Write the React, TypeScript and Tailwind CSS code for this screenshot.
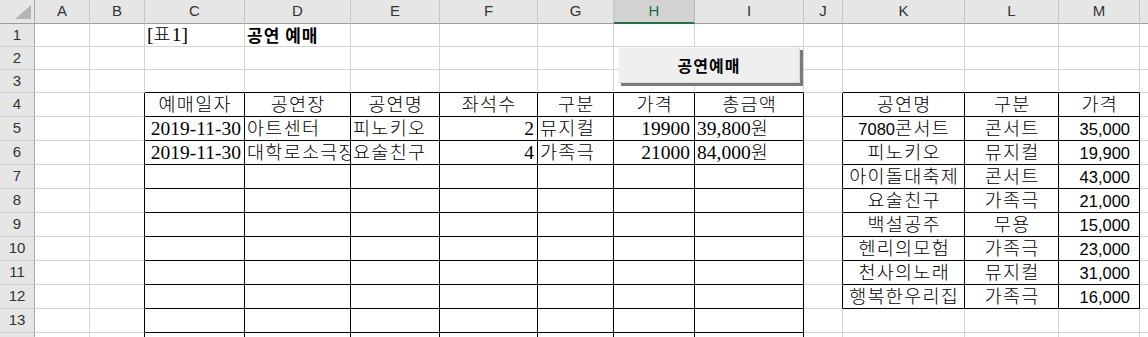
import React from "react";

const COLS = ["A", "B", "C", "D", "E", "F", "G", "H", "I", "J", "K", "L", "M"];
const COLW = [
  "w-[55px]",
  "w-[55px]",
  "w-[100px]",
  "w-[106px]",
  "w-[89px]",
  "w-[98px]",
  "w-[76px]",
  "w-[81px]",
  "w-[109px]",
  "w-[39px]",
  "w-[122px]",
  "w-[94px]",
  "w-[81px]",
];

type Align = "l" | "c" | "r";
type Font = "serif" | "sans" | "bold";
type Cell = { t: string; a: Align; f: Font };

const S = (t: string, a: Align): Cell => ({ t, a, f: "serif" });
const K = (t: string, a: Align): Cell => ({ t, a, f: "sans" });

const data: Record<number, Record<number, Cell>> = {
  1: { 2: S("[표1]", "l"), 3: { t: "공연 예매", a: "l", f: "bold" } },
  4: {
    2: S("예매일자", "c"),
    3: S("공연장", "c"),
    4: S("공연명", "c"),
    5: S("좌석수", "c"),
    6: S("구분", "c"),
    7: S("가격", "c"),
    8: S("총금액", "c"),
    10: K("공연명", "c"),
    11: K("구분", "c"),
    12: K("가격", "c"),
  },
  5: {
    2: S("2019-11-30", "r"),
    3: S("아트센터", "l"),
    4: S("피노키오", "l"),
    5: S("2", "r"),
    6: S("뮤지컬", "l"),
    7: S("19900", "r"),
    8: S("39,800원", "l"),
    10: K("7080콘서트", "c"),
    11: K("콘서트", "c"),
    12: K("35,000", "r"),
  },
  6: {
    2: S("2019-11-30", "r"),
    3: S("대학로소극장", "l"),
    4: S("요술친구", "l"),
    5: S("4", "r"),
    6: S("가족극", "l"),
    7: S("21000", "r"),
    8: S("84,000원", "l"),
    10: K("피노키오", "c"),
    11: K("뮤지컬", "c"),
    12: K("19,900", "r"),
  },
  7: { 10: K("아이돌대축제", "c"), 11: K("콘서트", "c"), 12: K("43,000", "r") },
  8: { 10: K("요술친구", "c"), 11: K("가족극", "c"), 12: K("21,000", "r") },
  9: { 10: K("백설공주", "c"), 11: K("무용", "c"), 12: K("15,000", "r") },
  10: { 10: K("헨리의모험", "c"), 11: K("가족극", "c"), 12: K("23,000", "r") },
  11: { 10: K("천사의노래", "c"), 11: K("뮤지컬", "c"), 12: K("31,000", "r") },
  12: { 10: K("행복한우리집", "c"), 11: K("가족극", "c"), 12: K("16,000", "r") },
};

function splitRuns(t: string) {
  const runs: { s: string; h: boolean }[] = [];
  for (const ch of t) {
    const h = /[\u3131-\uD79D]/.test(ch);
    const last = runs[runs.length - 1];
    if (last && last.h === h) last.s += ch;
    else runs.push({ s: ch, h });
  }
  return runs;
}

function CellText({ c, center }: { c: Cell; center: boolean }) {
  if (c.f === "bold") {
    return (
      <span className="font-['Noto_Sans_CJK_KR',sans-serif] text-[17px] font-bold leading-[20px] tracking-[1px] text-black">
        {c.t}
      </span>
    );
  }
  const runs = splitRuns(c.t);
  return (
    <span className={`leading-[20px] text-black ${center ? "pl-[1.4px]" : ""}`}>
      {runs.map((r, i) =>
        r.h ? (
          <span
            key={i}
            className="font-['Noto_Sans_CJK_KR',sans-serif] text-[18.5px] font-light tracking-[1.3px]"
          >
            {r.s}
          </span>
        ) : c.f === "serif" ? (
          <span key={i} className="font-['Liberation_Serif',serif] text-[19.5px]">
            {r.s}
          </span>
        ) : (
          <span key={i} className="font-['Liberation_Sans',sans-serif] text-[16.5px]">
            {r.s}
          </span>
        )
      )}
    </span>
  );
}

function rightBlack(r: number, c: number) {
  if (r >= 4 && c >= 1 && c <= 8) return true;
  if (r >= 4 && r <= 12 && c >= 9 && c <= 12) return true;
  return false;
}
function bottomBlack(r: number, c: number) {
  if (r >= 3 && c >= 2 && c <= 8) return true;
  if (r >= 3 && r <= 12 && c >= 10 && c <= 12) return true;
  return false;
}

const ALIGN: Record<Align, string> = {
  l: "justify-start pl-[2px]",
  c: "justify-center",
  r: "justify-end pr-[3px]",
};

function Row({ r }: { r: number }) {
  const h = r <= 3 ? "h-[23px]" : "h-[24px]";
  const rowData = data[r] || {};
  return (
    <div className={`flex ${h}`}>
      <div className="flex w-[35px] shrink-0 items-center justify-center border-r border-b border-r-[#a8a8a8] border-b-[#d0d0d0] bg-[#e6e6e6] font-['Liberation_Sans',sans-serif] text-[15px] text-[#333]">
        {r}
      </div>
      {COLS.map((_, c) => {
        const cell = rowData[c];
        const rc = rightBlack(r, c) ? "border-r-black" : "border-r-[#d4d4d4]";
        const bc = bottomBlack(r, c) ? "border-b-black" : "border-b-[#d4d4d4]";
        let extra = "";
        if (cell) {
          extra = ALIGN[cell.a];
          if (c === 12 && cell.a === "r") extra = "justify-end pr-[9px]";
          if (c === 7 && cell.a === "r") extra = "justify-end pr-[4px]";
        }
        const clip = r === 6 && c === 3 ? "overflow-x-clip" : "";
        return (
          <div
            key={c}
            className={`flex shrink-0 items-end whitespace-nowrap border-r border-b pb-[1px] ${COLW[c]} ${rc} ${bc} ${extra} ${clip}`}
          >
            {cell ? <CellText c={cell} center={cell.a === "c"} /> : null}
          </div>
        );
      })}
      <div className="flex-1 border-b border-b-[#d4d4d4]" />
    </div>
  );
}

export default function App() {
  return (
    <div className="relative h-[337px] w-[1148px] overflow-hidden bg-white">
      <div className="flex h-[24px]">
        <div className="relative w-[35px] shrink-0 border-r border-b border-r-[#a8a8a8] border-b-[#9e9e9e] bg-[#e6e6e6]">
          <svg className="absolute left-[15px] top-[5px]" width="16" height="14" viewBox="0 0 16 14">
            <polygon points="16,0 16,14 0,14" fill="#b5b5b5" />
          </svg>
        </div>
        {COLS.map((l, c) =>
          l === "H" ? (
            <div
              key={l}
              className={`flex shrink-0 items-center justify-center border-r border-b-2 border-r-[#b8b8b8] border-b-[#217346] bg-[#d2d2d2] font-['Liberation_Sans',sans-serif] text-[15px] text-[#1f6e43] ${COLW[c]}`}
            >
              {l}
            </div>
          ) : (
            <div
              key={l}
              className={`flex shrink-0 items-center justify-center border-r border-b border-r-[#c6c6c6] border-b-[#9e9e9e] bg-[#e6e6e6] font-['Liberation_Sans',sans-serif] text-[15px] text-[#333] ${COLW[c]}`}
            >
              {l}
            </div>
          )
        )}
        <div className="flex-1 border-b border-b-[#9e9e9e] bg-[#e6e6e6]" />
      </div>
      {[1, 2, 3, 4, 5, 6, 7, 8, 9, 10, 11, 12, 13, 14].map((r) => (
        <Row key={r} r={r} />
      ))}
      <div className="absolute left-[618px] top-[47px] flex h-[36px] w-[182px] items-center justify-center border border-t-[#f8f8f8] border-l-[#f8f8f8] border-r-[#dadada] border-b-[#dadada] bg-[#efefef] shadow-[3px_3px_0_#7b7b7b]">
        <span className="font-['Noto_Sans_CJK_KR',sans-serif] text-[16px] font-bold tracking-[1px] text-black">
          공연예매
        </span>
      </div>
    </div>
  );
}
